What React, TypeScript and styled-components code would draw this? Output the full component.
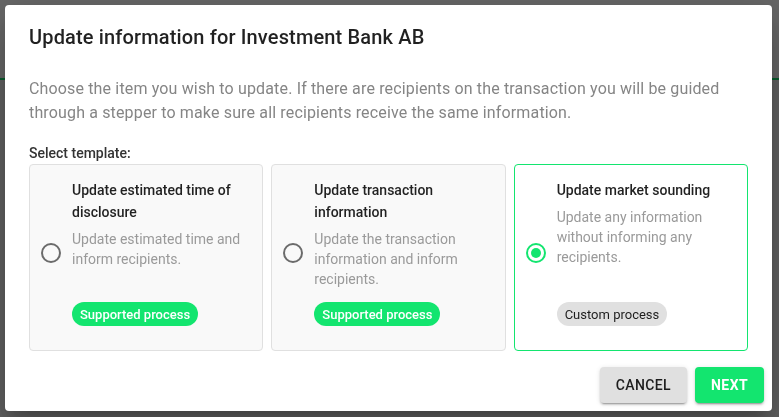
import React, { useState } from 'react'
import styled, { createGlobalStyle } from 'styled-components'

const green = '#13e56f'

const GlobalStyle = createGlobalStyle`
  html, body {
    margin: 0;
    padding: 0;
    background: #f0f0f0;
    font-family: Roboto, 'Liberation Sans', sans-serif;
  }
  * {
    box-sizing: border-box;
  }
`

const Page = styled.div`
  width: 779px;
  height: 417px;
`

const PageHeader = styled.header`
  height: 80px;
  border-bottom: 2px solid ${green};
  background: #fff;
`

const Backdrop = styled.div`
  position: fixed;
  inset: 0;
  background: rgba(0, 0, 0, 0.6);
  display: flex;
  align-items: flex-start;
  padding: 5px;
`

const Dialog = styled.div`
  width: 767px;
  background: #fff;
  border-radius: 4px;
  display: flex;
  flex-direction: column;
  box-shadow: 0 11px 15px -7px rgba(0, 0, 0, 0.2),
    0 24px 38px 3px rgba(0, 0, 0, 0.14), 0 9px 46px 8px rgba(0, 0, 0, 0.12);
`

const Title = styled.h2`
  margin: 0;
  padding: 16px 24px;
  font-size: 20px;
  line-height: 32px;
  font-weight: 500;
  letter-spacing: 0.15px;
  color: rgba(0, 0, 0, 0.87);
`

const Content = styled.div`
  padding: 8px 24px;
`

const Description = styled.p`
  margin: 0 0 18px;
  font-size: 16px;
  line-height: 24px;
  color: #858585;
  letter-spacing: 0.15px;
`

const Label = styled.div`
  font-size: 14px;
  line-height: 20px;
  font-weight: 500;
  color: #333;
  margin-bottom: 1px;
`

const CardGrid = styled.div`
  display: grid;
  grid-template-columns: repeat(3, 1fr);
  gap: 8px;
`

type CardProps = {
  $selected: boolean
}

const Card = styled.label<CardProps>`
  display: flex;
  align-items: stretch;
  padding: 14px 16px 24px 0;
  border-radius: 4px;
  border: 1px solid ${({ $selected }) => ($selected ? green : '#e0e0e0')};
  background: ${({ $selected }) => ($selected ? '#fff' : '#f9f9f9')};
  cursor: pointer;
`

const RadioBox = styled.span`
  flex: 0 0 42px;
  width: 42px;
  height: 42px;
  align-self: center;
  display: flex;
  align-items: center;
  justify-content: center;
`

const CardBody = styled.div`
  flex: 1;
  display: flex;
  flex-direction: column;
`

const CardTitle = styled.div`
  font-size: 14px;
  line-height: 22px;
  font-weight: 500;
  color: rgba(0, 0, 0, 0.87);
  margin-bottom: 6px;
`

const CardText = styled.div`
  font-size: 14px;
  line-height: 20px;
  color: #9a9a9a;
  margin-bottom: 13px;
`

type BadgeProps = {
  $supported: boolean
}

const Badge = styled.span<BadgeProps>`
  margin-top: auto;
  align-self: flex-start;
  height: 24px;
  padding: 0 8px;
  border-radius: 12px;
  display: inline-flex;
  align-items: center;
  font-size: 13px;
  font-weight: ${({ $supported }) => ($supported ? 500 : 400)};
  color: ${({ $supported }) => ($supported ? '#fff' : 'rgba(0, 0, 0, 0.87)')};
  background: ${({ $supported }) => ($supported ? green : '#e0e0e0')};
`

const Actions = styled.div`
  display: flex;
  justify-content: flex-end;
  gap: 8px;
  padding: 8px;
`

type ButtonProps = {
  $primary?: boolean
}

const Button = styled.button<ButtonProps>`
  height: 36px;
  padding: 6px 16px;
  border: none;
  border-radius: 4px;
  font-family: inherit;
  font-size: 14px;
  font-weight: ${({ $primary }) => ($primary ? 700 : 500)};
  letter-spacing: 0.4px;
  text-transform: uppercase;
  cursor: pointer;
  color: ${({ $primary }) => ($primary ? '#fff' : 'rgba(0, 0, 0, 0.87)')};
  background: ${({ $primary }) => ($primary ? green : '#e0e0e0')};
  box-shadow: 0 3px 1px -2px rgba(0, 0, 0, 0.2), 0 2px 2px 0 rgba(0, 0, 0, 0.14),
    0 1px 5px 0 rgba(0, 0, 0, 0.12);
`

const RadioIcon = ({ checked }: { checked: boolean }) => (
  <svg width='24' height='24' viewBox='0 0 24 24'>
    <circle
      cx='12'
      cy='12'
      r='9'
      fill='none'
      stroke={checked ? green : '#6b6b6b'}
      strokeWidth='2'
    />
    {checked && <circle cx='12' cy='12' r='5' fill={green} />}
  </svg>
)

const templates = [
  {
    id: 'disclosure',
    title: 'Update estimated time of disclosure',
    text: 'Update estimated time and inform recipients.',
    supported: true,
  },
  {
    id: 'transaction',
    title: 'Update transaction information',
    text: 'Update the transaction information and inform recipients.',
    supported: true,
  },
  {
    id: 'sounding',
    title: 'Update market sounding',
    text: 'Update any information without informing any recipients.',
    supported: false,
  },
]

export default function App() {
  const [selected, setSelected] = useState('sounding')

  return (
    <>
      <GlobalStyle />
      <Page>
        <PageHeader />
      </Page>
      <Backdrop>
        <Dialog role='dialog' aria-labelledby='dialog-title'>
          <Title id='dialog-title'>Update information for Investment Bank AB</Title>
          <Content>
            <Description>
              Choose the item you wish to update. If there are recipients on the
              transaction you will be guided through a stepper to make sure all
              recipients receive the same information.
            </Description>
            <Label>Select template:</Label>
            <CardGrid role='radiogroup'>
              {templates.map((t) => (
                <Card
                  key={t.id}
                  $selected={selected === t.id}
                  onClick={() => setSelected(t.id)}
                >
                  <RadioBox>
                    <RadioIcon checked={selected === t.id} />
                  </RadioBox>
                  <CardBody>
                    <CardTitle>{t.title}</CardTitle>
                    <CardText>{t.text}</CardText>
                    <Badge $supported={t.supported}>
                      {t.supported ? 'Supported process' : 'Custom process'}
                    </Badge>
                  </CardBody>
                </Card>
              ))}
            </CardGrid>
          </Content>
          <Actions>
            <Button>Cancel</Button>
            <Button $primary>Next</Button>
          </Actions>
        </Dialog>
      </Backdrop>
    </>
  )
}
